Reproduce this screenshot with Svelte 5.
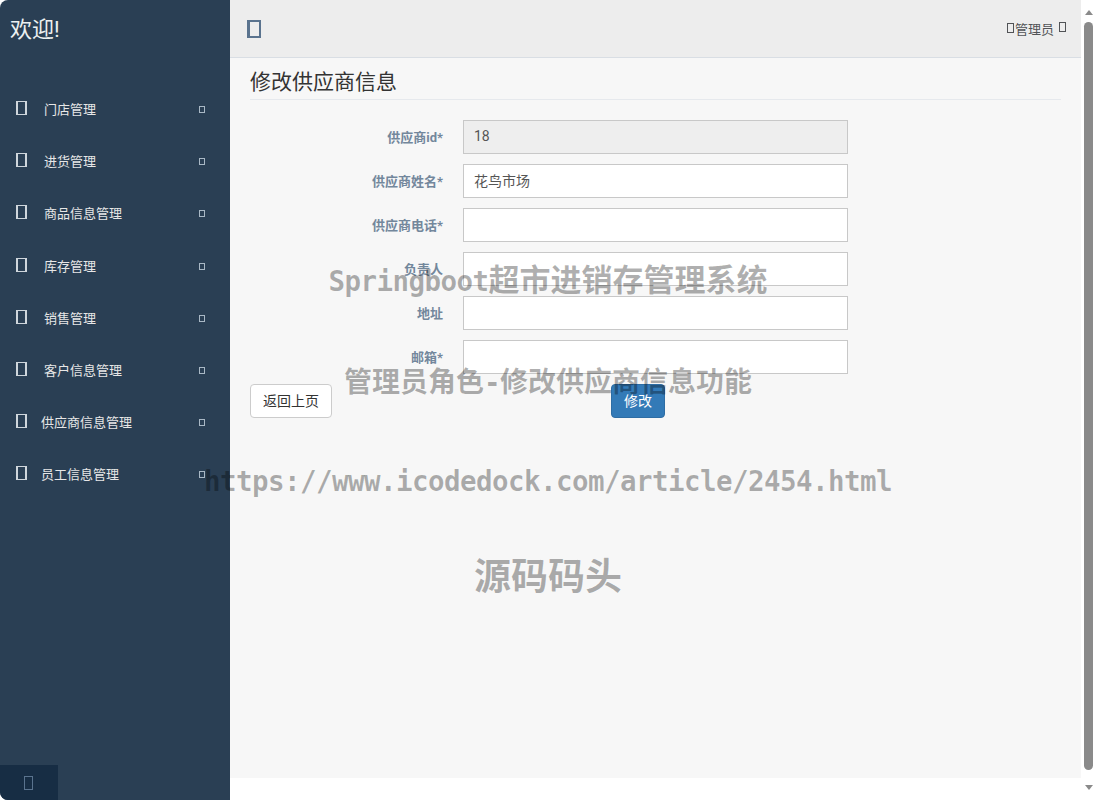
<script>
  const menu = [
    { label: '门店管理' },
    { label: '进货管理' },
    { label: '商品信息管理' },
    { label: '库存管理' },
    { label: '销售管理' },
    { label: '客户信息管理' },
    { label: '供应商信息管理', tight: true },
    { label: '员工信息管理', tight: true }
  ];
  const fields = [
    { label: '供应商id*', value: '18', disabled: true },
    { label: '供应商姓名*', value: '花鸟市场' },
    { label: '供应商电话*', value: '' },
    { label: '负责人', value: '' },
    { label: '地址', value: '' },
    { label: '邮箱*', value: '' }
  ];
</script>

<div class="page">
  <aside class="sidebar">
    <h1 class="welcome">欢迎!</h1>
    <nav class="menu">
      {#each menu as item}
        <div class="row">
          <span class="tofu big"></span>
          <span class="label" class:tight={item.tight}>{item.label}</span>
          <span class="tofu small"></span>
        </div>
      {/each}
    </nav>
    <div class="foot"><div class="footbtn"><span class="tofu foot-icon"></span></div></div>
  </aside>

  <main class="main">
    <header class="topbar">
      <span class="tofu toggle"></span>
      <div class="user">
        <span class="tofu user-icon"></span><span>管理员</span><span class="tofu user-caret"></span>
      </div>
    </header>
    <section class="content">
      <h2 class="title">修改供应商信息</h2>
      <form class="form">
        {#each fields as f}
          <div class="field">
            <label class="flabel" for={f.label}>{f.label}</label>
            <input id={f.label} class="input" value={f.value} disabled={f.disabled} />
          </div>
        {/each}
        <div class="actions">
          <button type="button" class="btn back">返回上页</button>
          <button type="button" class="btn save">修改</button>
        </div>
      </form>
    </section>
  </main>

  <div class="scrollbar">
    <span class="arrow up"></span>
    <span class="thumb"></span>
    <span class="arrow down"></span>
  </div>

  <div class="watermark">
    <div class="wm l1"><span class="lat">Springboot</span>超市进销存管理系统</div>
    <div class="wm l2">管理员角色<span class="lat">-</span>修改供应商信息功能</div>
    <div class="wm l3"><span class="lat">https://www.icodedock.com/article/2454.html</span></div>
    <div class="wm l4">源码码头</div>
  </div>
</div>

<style>
  :global(body) {
    margin: 0;
    background: #fff;
    overflow: hidden;
  }
  .page {
    position: relative;
    display: flex;
    align-items: flex-start;
    width: 1096px;
    height: 800px;
    overflow: hidden;
    font-family: Roboto, "Noto Sans CJK SC", sans-serif;
  }
  .sidebar {
    display: flex;
    flex-direction: column;
    flex: none;
    width: 230px;
    height: 800px;
    background: #2a3f54;
    color: #ecf0f1;
    border-radius: 8px 0 0 8px;
    overflow: hidden;
  }
  .welcome {
    margin: 0;
    height: 84.1px;
    padding: 14px 0 0 10px;
    box-sizing: border-box;
    font-size: 22px;
    line-height: 32px;
    font-weight: 400;
    color: #ecf0f1;
  }
  .menu {
    display: grid;
    grid-auto-rows: 52.14px;
  }
  .row {
    display: flex;
    align-items: center;
    padding-left: 16px;
    font-size: 13px;
    color: #e7e7e7;
  }
  .tofu {
    display: block;
    flex: none;
    box-sizing: border-box;
  }
  .big {
    width: 11px;
    height: 14px;
    border: 2px solid #cfd6dc;
    border-top-width: 1px;
    border-bottom-width: 1px;
    margin-top: -4px;
  }
  .small {
    width: 6px;
    height: 7px;
    border: 1px solid #a9b8c5;
    margin-left: auto;
    margin-right: 25px;
    margin-top: -1px;
  }
  .label {
    margin-left: 17px;
    line-height: 20px;
  }
  .label.tight {
    margin-left: 14px;
  }
  .foot {
    margin-top: auto;
    height: 35px;
  }
  .footbtn {
    display: flex;
    align-items: center;
    justify-content: center;
    width: 58px;
    height: 35px;
    background: #172d44;
  }
  .foot-icon {
    width: 9px;
    height: 14px;
    border: 1.5px solid #5a738e;
    margin-left: -2px;
  }
  .main {
    flex: none;
    width: 851px;
    height: 778px;
    background: #f7f7f7;
  }
  .topbar {
    display: flex;
    align-items: center;
    justify-content: space-between;
    height: 58px;
    box-sizing: border-box;
    padding: 0 15px 0 17px;
    background: #ededed;
    border-bottom: 1px solid #d9dee4;
  }
  .toggle {
    width: 14px;
    height: 18px;
    border: 2px solid #5a738e;
    border-left-width: 3px;
    margin-top: 1px;
  }
  .user {
    display: flex;
    align-items: center;
    font-size: 13px;
    color: #515356;
    margin-top: -1px;
  }
  .user-icon {
    width: 7px;
    height: 10px;
    border: 1px solid #515356;
    margin-right: 1px;
  }
  .user-caret {
    width: 7px;
    height: 10px;
    border: 1px solid #515356;
    margin: -2px 0 0 5px;
  }
  .content {
    padding: 0 20px;
  }
  .title {
    margin: 0;
    padding-top: 10px;
    height: 31px;
    line-height: 29px;
    font-size: 21px;
    font-weight: 400;
    color: #333;
    border-bottom: 1px solid #e6e9ed;
  }
  .form {
    display: flex;
    flex-direction: column;
    gap: 10px;
    padding-top: 20px;
  }
  .field {
    display: grid;
    grid-template-columns: 193px 385px;
    column-gap: 20px;
    align-items: center;
    height: 34px;
  }
  .flabel {
    text-align: right;
    font-size: 13px;
    font-weight: 700;
    color: #73879c;
    margin-top: -2px;
  }
  .input {
    display: block;
    width: 385px;
    height: 34px;
    box-sizing: border-box;
    padding: 0 10px 2px;
    border: 1px solid #c8c8c8;
    border-radius: 0;
    outline: none;
    background: #fff;
    font: 14px Roboto, "Noto Sans CJK SC", sans-serif;
    color: #555;
  }
  .input:disabled {
    background: #eee;
    color: #555;
    opacity: 1;
  }
  .actions {
    display: flex;
    gap: 279px;
  }
  .btn {
    height: 34px;
    box-sizing: border-box;
    padding: 0 12px 3px;
    border-radius: 4px;
    border: 1px solid #ccc;
    font: 14px Roboto, "Noto Sans CJK SC", sans-serif;
  }
  .back {
    width: 82px;
    background: #fff;
    color: #333;
  }
  .save {
    width: 54px;
    background: #337ab7;
    border-color: #2e6da4;
    color: #fff;
  }
  .scrollbar {
    flex: none;
    width: 15px;
    height: 800px;
    display: flex;
    flex-direction: column;
    align-items: center;
    background: #fff;
  }
  .thumb {
    display: block;
    width: 9px;
    height: 748px;
    border-radius: 5px;
    background: #8a8a8a;
  }
  .arrow {
    display: block;
    width: 0;
    height: 0;
    border-left: 4.5px solid transparent;
    border-right: 4.5px solid transparent;
  }
  .up {
    border-bottom: 5px solid #8a8a8a;
    margin: 10px 0 7px;
  }
  .down {
    border-top: 5px solid #8a8a8a;
    margin-top: 15px;
  }
  .watermark {
    position: absolute;
    left: 0;
    top: 228px;
    width: 1096px;
    pointer-events: none;
    color: rgba(0, 0, 0, 0.31);
    font-family: "Noto Sans CJK SC", sans-serif;
    font-weight: 700;
    text-align: center;
  }
  .wm {
    height: 100px;
    line-height: 100px;
    white-space: nowrap;
  }
  .lat {
    font-family: "DejaVu Sans Mono", "Liberation Mono", monospace;
    font-size: 27.5px;
    letter-spacing: -0.56px;
  }
  .l1 {
    font-size: 31px;
  }
  .l2 {
    font-size: 28px;
    margin-top: 2px;
  }
  .l3 {
    margin-top: 1px;
  }
  .l4 {
    font-size: 37px;
    margin-top: -7px;
  }
</style>
